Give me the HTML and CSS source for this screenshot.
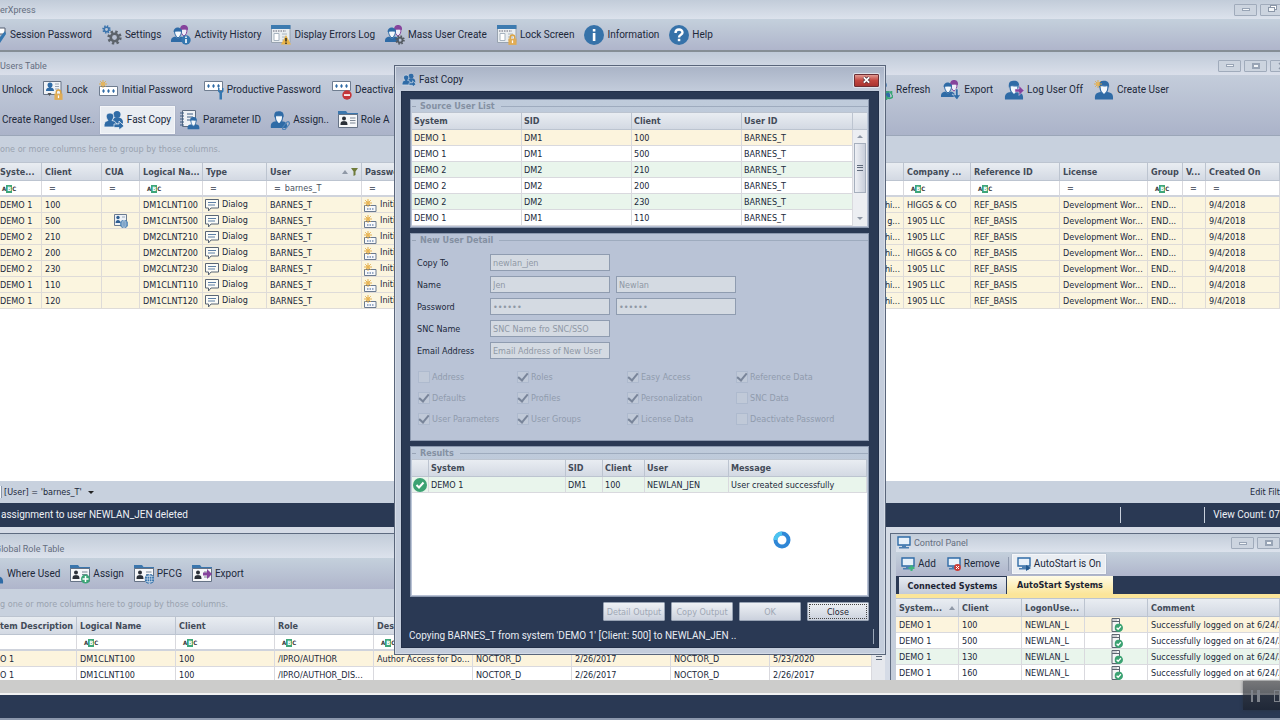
FILE: index.html
```html
<!DOCTYPE html>
<html lang="en">
<head>
<meta charset="utf-8">
<title>UserXpress</title>
<link rel="stylesheet" href="styles.css">
</head>
<body>
<svg class="defs" aria-hidden="true">
  <symbol id="person" viewBox="0 0 20 20">
    <path fill="#2f6ba6" d="M1 19.500c-.5-5 1-7 6-7.500l3 3 3-3c5 .5 6.500 2.500 6 7.500z"/>
    <path fill="#f4f8fc" stroke="#2f6ba6" stroke-width="1.200" d="M6 5.500c0 4 1 6.500 2 7.300l2 2.200 2-2.200c1-.8 2-3.300 2-7.300-3 1-5 0-8 0z"/>
    <path fill="#2f6ba6" d="M5 8C4 3 6 1 8 1c5-1 8 1 7 7l-1.200-2.500C11 6 9 5 6.500 5.500z"/>
  </symbol>
  <symbol id="pair" viewBox="0 0 20 20">
    <path fill="#f0eef8" stroke="#86439c" stroke-width="1" d="M10 4c0 4 1 6 3 7 2-1 3-3 3-7z"/>
    <path fill="#86439c" d="M9 5c0-4 2-5 4-5s4.500 1 4 5c-2-1-5-1-8 0z"/>
    <path fill="#2f6ba6" d="M0 17c-.3-3.500 1-5 4.500-5.500L7 13.500l2.500-2c3.500.5 4.800 2 4.500 5.500z"/>
    <path fill="#f4f8fc" stroke="#2f6ba6" d="M3.500 6c0 3 1 5 3.500 7 2.500-2 3.500-4 3.500-7z"/>
    <path fill="#2f6ba6" d="M2.500 7c0-3 2-4.500 4-4.500S11.500 4 11 7c-2-1.200-5-1.200-8.500 0z"/>
  </symbol>
  <symbol id="gear" viewBox="0 0 20 20">
    <circle cx="10" cy="10" r="7.500" fill="none" stroke="currentColor" stroke-width="4" stroke-dasharray="3 2.900"/>
    <circle cx="10" cy="10" r="5" fill="none" stroke="currentColor" stroke-width="3.500"/>
  </symbol>
  <symbol id="i-session" viewBox="0 0 20 20">
    <path fill="#fff" stroke="#555f70" d="M0 3h19v6H0z"/><path fill="#3577b0" d="m8 11 3-2 3 3 5-6 1 3-6 9z"/>
  </symbol>
  <symbol id="i-settings" viewBox="0 0 20 20">
    <use href="#gear" x="0" y="0" width="9" height="9" color="#3b74ad"/>
    <use href="#gear" x="5" y="5" width="15" height="15" color="#5d636b"/>
  </symbol>
  <symbol id="i-history" viewBox="0 0 20 20">
    <use href="#pair" width="20" height="20"/><circle cx="15" cy="15" r="4.700" fill="#3577b0"/>
    <path fill="#fff" d="M14.200 11.500h1.600v1.500h-1.600zM14.200 14h1.600v4h-1.600z"/>
  </symbol>
  <symbol id="screen" viewBox="0 0 20 20">
    <path fill="#e9edf0" stroke="#98a3b0" d="M.5.5h18.500v17H.5z"/><path fill="#3d7bb0" d="M0 0h19.500v4H0z"/>
    <path stroke="#667" stroke-dasharray="1.500 1" d="M2 6h13"/><path stroke="#a8b4c0" d="M3 8.500h5v7H3zM11 9h5M11 12h5M11 15h5" fill="#fff"/>
  </symbol>
  <symbol id="i-errors" viewBox="0 0 20 20">
    <use href="#screen" width="20" height="20"/><path fill="#eab54a" d="M15 10l5 9.500H10z"/><path fill="#222" d="M14.300 13h1.400v3.500h-1.400zM14.300 17.500h1.400V19h-1.400z"/>
  </symbol>
  <symbol id="padlock" viewBox="0 0 10 12">
    <path fill="none" stroke="#dba342" stroke-width="1.600" d="M2.500 6V3.500a2.500 2.500 0 0 1 5 0V6"/><path fill="#e0ac55" d="M.5 5h9v7h-9z"/><path fill="#fff" d="M4.300 7h1.400v3H4.300z"/>
  </symbol>
  <symbol id="i-lockscreen" viewBox="0 0 20 20">
    <use href="#screen" width="20" height="20"/><use href="#padlock" x="11" y="9" width="9" height="11"/>
  </symbol>
  <symbol id="i-mass" viewBox="0 0 20 20">
    <use href="#pair" width="20" height="20"/><use href="#gear" x="10" y="10" width="10" height="10" color="#555b62"/>
  </symbol>
  <symbol id="i-info" viewBox="0 0 20 20">
    <circle cx="10" cy="10" r="10" fill="#3672a9"/><path fill="#fff" d="M8.800 4h2.600v2.500H8.800zM8.800 8h2.600v8H8.800z"/>
  </symbol>
  <symbol id="i-help" viewBox="0 0 20 20">
    <circle cx="10" cy="10" r="10" fill="#3672a9"/><path fill="none" stroke="#fff" stroke-width="2.400" d="M6.500 8c0-4.500 7-4.500 7-.5 0 2.500-3.500 2-3.500 5"/><path fill="#fff" d="M8.800 13.800h2.500v2.400H8.800z"/>
  </symbol>
  <symbol id="idcard" viewBox="0 0 20 20">
    <path fill="#f0f3f7" stroke="#667386" d="M.5 1.500H18v13H.5z"/><circle cx="7" cy="5" r="2.500" fill="#2f6ba6"/><path fill="#2f6ba6" d="M3 11c0-3 2-3 3-3.500V6h2v1.500c1 .5 3 .5 3 3.500z"/>
    <path stroke="#9aa4b2" d="M12 4h4M12 6.500h4M12 9h4"/><path fill="#555" d="M4.500 13h4l-2 3z"/>
  </symbol>
  <symbol id="i-lock" viewBox="0 0 20 20">
    <use href="#idcard" width="20" height="20"/><use href="#padlock" x="11" y="9" width="9" height="11"/>
  </symbol>
  <symbol id="stars" viewBox="0 0 20 10">
    <path fill="#fff" stroke="#6f7d90" d="M.5.5h18v9H.5z"/><path stroke="#2f6ba6" stroke-width="1.200" d="M3 5h3M4.500 3.300v3.400M8 5h3M9.500 3.300v3.400M13 5h3M14.500 3.300v3.400"/>
  </symbol>
  <symbol id="sun" viewBox="0 0 10 10">
    <path stroke="#e0a840" stroke-width="1.100" d="M5 0v10M0 5h10M1.500 1.500l7 7M8.500 1.500l-7 7"/><circle cx="5" cy="5" r="2.200" fill="#e9b556"/>
  </symbol>
  <symbol id="i-initial" viewBox="0 0 20 20">
    <use href="#stars" y="6" width="20" height="10"/><use href="#sun" width="8" height="8"/>
  </symbol>
  <symbol id="i-prod" viewBox="0 0 20 20">
    <use href="#stars" y="1" width="20" height="10"/><path fill="#3577b0" d="M14 8v3.500l1.500 1.500v6.500h2.500v-6.500l1.500-1.500V8h-1.500v3h-2.500V8z"/>
  </symbol>
  <symbol id="i-deact" viewBox="0 0 20 20">
    <use href="#stars" y="1" width="20" height="10"/><circle cx="15" cy="15" r="4.700" fill="#c5373a"/><path fill="#fff" d="M12 14.200h6v1.700h-6z"/>
  </symbol>
  <symbol id="i-copy" viewBox="0 0 20 20">
    <circle cx="13" cy="4.500" r="3.500" fill="#2f6ba6"/><path fill="#2f6ba6" d="M8 14c-1-5 2-6 4-6.500h3c3 1 4 2 4 6z"/>
    <path fill="#2f6ba6" stroke="#eef3f8" stroke-width=".8" d="M0 17c0-4 1-6 4-6.500C1 7 2 3 6 3s5 4 2 7.500c3 .5 5 2 5 6.500z"/>
    <path fill="#2f6ba6" stroke="#eef3f8" stroke-width=".7" d="M10 14h5v-3l5 5-5 4v-2.500h-5z"/>
  </symbol>
  <symbol id="i-param" viewBox="0 0 20 20">
    <path fill="#eef1f5" stroke="#5e6d82" d="M2.500.5h13v16h-13z"/><path stroke="#3f5e84" d="M0 3h4M0 6h4M0 9h4M0 12h4M0 15h4M7 4h6M7 7h6M7 10h3"/>
    <use href="#person" x="7" y="6" width="13" height="14"/>
  </symbol>
  <symbol id="i-assign" viewBox="0 0 20 20">
    <use href="#person" width="18" height="19"/><path fill="none" stroke="#4e83b8" stroke-width="1.200" d="m13 17 4-5c2-1 3 1 2 2.500l-4 5c-2 1-3-1-2-2.500l3-4"/>
  </symbol>
  <symbol id="i-role" viewBox="0 0 20 20">
    <path fill="#3b76ad" d="M0 1h8l1.500 2H20v3H0z"/><path fill="#f6f7f9" stroke="#667386" d="M.5 4.500h19v13H.5z"/>
    <circle cx="6" cy="8.500" r="2" fill="#2b3038"/><path fill="#2b3038" d="M2.500 15c0-4 1.500-3.500 3.500-4 2 .5 3.500 0 3.500 4z"/><path stroke="#7d8795" d="M12 8h5.500M12 10.500h5.500M12 13h5.500"/>
  </symbol>
  <symbol id="i-roleadd" viewBox="0 0 20 20">
    <use href="#i-role" width="20" height="20"/><circle cx="15.500" cy="15" r="4.500" fill="#3ca577"/><path stroke="#fff" stroke-width="1.500" d="M12.500 15h6M15.500 12v6"/>
  </symbol>
  <symbol id="globe" viewBox="0 0 10 10">
    <circle cx="5" cy="5" r="5" fill="#3b76ad"/><path fill="none" stroke="#dfe8f2" stroke-width=".6" d="M0 5h10M5 0v10M1 2.500h8M1 7.500h8M5 0c-3 2-3 8 0 10 3-2 3-8 0-10"/>
  </symbol>
  <symbol id="i-pfcg" viewBox="0 0 20 20">
    <use href="#i-role" width="20" height="20"/><use href="#globe" x="10.500" y="10" width="10" height="10"/>
  </symbol>
  <symbol id="i-roleexport" viewBox="0 0 20 20">
    <use href="#i-role" width="20" height="20"/><path fill="#86439c" d="M11 8.500h4V5l5 5-5 5v-3.500h-4z"/>
  </symbol>
  <symbol id="i-refresh" viewBox="0 0 20 20">
    <use href="#person" width="18" height="18"/><path fill="none" stroke="#38a774" stroke-width="1.600" d="M12 15c0-4 5-4 6.500-1.500V11M20 15c0 4-5 4-6.500 2V20"/>
  </symbol>
  <symbol id="i-export" viewBox="0 0 20 20">
    <use href="#pair" width="20" height="20"/><path fill="#2f6ba6" stroke="#dfe6f0" stroke-width=".5" d="M14.500 9h2.500v6l3-1-4 6-5-6 3.500 1z"/>
  </symbol>
  <symbol id="i-logoff" viewBox="0 0 20 20">
    <use href="#person" width="20" height="20"/><path fill="#86439c" stroke="#e3e2f0" stroke-width=".5" d="M11 9h4V5.500l5 5-5 5V12h-4z"/>
  </symbol>
  <symbol id="i-create" viewBox="0 0 20 20">
    <use href="#person" width="20" height="20"/><use href="#sun" width="8" height="8"/>
  </symbol>
  <symbol id="monitor" viewBox="0 0 14 14">
    <path fill="#e8f1fa" stroke="#2f6ba6" stroke-width="1.400" d="M1 1h12v8H1z"/><path fill="#4c7fb2" d="M5 9h4v2h3v1.500H2V11h3z"/>
  </symbol>
  <symbol id="i-add" viewBox="0 0 14 14">
    <use href="#monitor" width="14" height="14"/><path stroke="#3fb57e" stroke-width="2" d="M7.500 11h6M10.500 8v6"/>
  </symbol>
  <symbol id="i-remove" viewBox="0 0 14 14">
    <use href="#monitor" width="14" height="14"/><circle cx="10.500" cy="10.500" r="3.400" fill="#cc3b35"/><path stroke="#fff" d="m9 9 3 3M12 9l-3 3"/>
  </symbol>
  <symbol id="i-auto" viewBox="0 0 14 14">
    <use href="#monitor" width="14" height="14"/><path fill="#235a91" d="m9 8 5 3-5 3z"/>
  </symbol>
  <symbol id="i-dialog" viewBox="0 0 14 13">
    <path fill="#fbfbf6" stroke="#596575" d="M.5.500h13v8.500H6l-2.500 3V9h-3z"/><path stroke="#5d7fa5" d="M3 3.500h8M3 6h7"/>
  </symbol>
  <symbol id="i-pw" viewBox="0 0 13 13">
    <path fill="#f8f9fb" stroke="#6a7a90" d="M.5 6.500h11.500v6H.5z"/><path stroke="#3a5f92" stroke-dasharray="1.500 1" d="M3 10h7"/><use href="#sun" width="8" height="8"/>
  </symbol>
  <symbol id="i-cua" viewBox="0 0 14 14">
    <path fill="#edf1f6" stroke="#6a7a90" d="M.5.5h12v11H.5z"/><circle cx="4" cy="3.500" r="1.700" fill="#2f5f92"/><path fill="#2f5f92" d="M1.500 9c0-4 5-4 5 0z"/><path stroke="#9ab" d="M8 3h3"/><use href="#globe" x="6" y="6" width="8" height="8"/>
  </symbol>
  <symbol id="i-ok" viewBox="0 0 14 14">
    <circle cx="7" cy="7" r="7" fill="#3ba272"/><path fill="none" stroke="#fff" stroke-width="2" d="m3.500 7 2.500 2.500 4.500-5"/>
  </symbol>
  <symbol id="i-server" viewBox="0 0 12 14">
    <path fill="#f4f5f6" stroke="#5c6570" d="M1 .5h7.500v13H1z"/><path stroke="#5c6570" d="M1 3.500h7.500M3 1.500v1M5 1.500v1"/><use href="#i-ok" x="3.500" y="5.500" width="8.500" height="8.500"/>
  </symbol>
</svg>

<div class="app">
  <header class="titlebar app-title"><span class="title-text">erXpress</span>
    <div class="winctl"><button aria-label="Minimize"><i class="g-min"></i></button><button aria-label="Restore"><i class="g-restore"></i></button></div>
  </header>
  <nav class="toolbar main-tools">
    <button class="tool cut-icon"><svg class="ic"><use href="#i-session"/></svg>Session Password</button>
    <button class="tool"><svg class="ic"><use href="#i-settings"/></svg>Settings</button>
    <button class="tool"><svg class="ic"><use href="#i-history"/></svg>Activity History</button>
    <button class="tool"><svg class="ic"><use href="#i-errors"/></svg>Display Errors Log</button>
    <button class="tool"><svg class="ic"><use href="#i-mass"/></svg>Mass User Create</button>
    <button class="tool"><svg class="ic"><use href="#i-lockscreen"/></svg>Lock Screen</button>
    <button class="tool"><svg class="ic"><use href="#i-info"/></svg>Information</button>
    <button class="tool"><svg class="ic"><use href="#i-help"/></svg>Help</button>
  </nav>

  <section class="users">
    <header class="titlebar sub-title"><span class="title-text">Users Table</span>
      <div class="winctl sub-ctl"><button aria-label="Minimize"><i class="g-min"></i></button><button aria-label="Maximize"><i class="g-max"></i></button><button aria-label="Close"><svg class="g-x" viewBox="0 0 8 8"><path stroke="#8c97a8" stroke-width="1.500" d="m1 1 6 6M7 1 1 7"/></svg></button></div>
    </header>
    <div class="ribbon">
      <div class="ribbon-row split">
        <div class="toolgroup">
          <button class="tool">Unlock</button>
          <button class="tool"><svg class="ic"><use href="#i-lock"/></svg>Lock</button>
          <button class="tool"><svg class="ic"><use href="#i-initial"/></svg>Initial Password</button>
          <button class="tool"><svg class="ic"><use href="#i-prod"/></svg>Productive Password</button>
          <button class="tool"><svg class="ic"><use href="#i-deact"/></svg>Deactivate</button>
        </div>
        <div class="toolgroup">
          <button class="tool"><svg class="ic"><use href="#i-refresh"/></svg>Refresh</button>
          <button class="tool"><svg class="ic"><use href="#i-export"/></svg>Export</button>
          <button class="tool"><svg class="ic"><use href="#i-logoff"/></svg>Log User Off</button>
          <button class="tool"><svg class="ic"><use href="#i-create"/></svg>Create User</button>
        </div>
      </div>
      <div class="ribbon-row tight">
        <button class="tool">Create Ranged User..</button>
        <button class="tool pressed"><svg class="ic"><use href="#i-copy"/></svg>Fast Copy</button>
        <button class="tool"><svg class="ic"><use href="#i-param"/></svg>Parameter ID</button>
        <button class="tool spaced"><svg class="ic"><use href="#i-assign"/></svg>Assign..</button>
        <button class="tool spaced"><svg class="ic"><use href="#i-role"/></svg>Role A</button>
      </div>
    </div>
    <div class="groupby">one or more columns here to group by those columns.</div>
    <div class="grid-area">
      <table class="grid cream">
        <colgroup><col class="w41"><col class="w60"><col class="w38"><col class="w63"><col class="w64"><col class="w95"><col class="w479"><col class="w64"><col class="w67"><col class="w89"><col class="w88"><col class="w35"><col class="w23"><col></colgroup>
        <thead>
          <tr><th class="edge">Syste...</th><th>Client</th><th>CUA</th><th>Logical Na...</th><th>Type</th><th><span class="sortcell">User<span class="marks"><i class="sort"></i><svg class="funnel" viewBox="0 0 7 8"><path fill="#6f7b3a" d="M0 0h7L4.500 3.500V7L2.500 8V3.500z"/></svg></span></span></th><th>Password</th><th></th><th>Company ...</th><th>Reference ID</th><th>License</th><th>Group</th><th>V...</th><th>Created On</th></tr>
          <tr class="filter"><td><span class="abc flush">A<b>B</b>C</span></td><td><span class="eq">=</span></td><td><span class="eq">=</span></td><td><span class="abc">A<b>B</b>C</span></td><td><span class="eq">=</span></td><td><label class="eq" for="fuser">=</label><input id="fuser" class="filter-in" value="barnes_T"></td><td><span class="eq">=</span></td><td></td><td><span class="abc">A<b>B</b>C</span></td><td><span class="abc">A<b>B</b>C</span></td><td><span class="eq">=</span></td><td><span class="abc">A<b>B</b>C</span></td><td><span class="eq">=</span></td><td><span class="eq">=</span></td></tr>
        </thead>
        <tbody>
          <tr><td class="edge">DEMO 1</td><td>100</td><td></td><td>DM1CLNT100</td><td><svg class="dlg"><use href="#i-dialog"/></svg>Dialog</td><td>BARNES_T</td><td><svg class="pw"><use href="#i-pw"/></svg>Initial</td><td class="r">hi...</td><td>HIGGS &amp; CO</td><td>REF_BASIS</td><td>Development Wor...</td><td>END...</td><td></td><td>9/4/2018</td></tr>
          <tr><td class="edge">DEMO 1</td><td>500</td><td class="c"><svg class="cua"><use href="#i-cua"/></svg></td><td>DM1CLNT500</td><td><svg class="dlg"><use href="#i-dialog"/></svg>Dialog</td><td>BARNES_T</td><td><svg class="pw"><use href="#i-pw"/></svg>Initial</td><td class="r">g...</td><td>1905 LLC</td><td>REF_BASIS</td><td>Development Wor...</td><td>END...</td><td></td><td>9/4/2018</td></tr>
          <tr><td class="edge">DEMO 2</td><td>210</td><td></td><td>DM2CLNT210</td><td><svg class="dlg"><use href="#i-dialog"/></svg>Dialog</td><td>BARNES_T</td><td><svg class="pw"><use href="#i-pw"/></svg>Initial</td><td class="r">hi...</td><td>1905 LLC</td><td>REF_BASIS</td><td>Development Wor...</td><td>END...</td><td></td><td>9/4/2018</td></tr>
          <tr><td class="edge">DEMO 2</td><td>200</td><td></td><td>DM2CLNT200</td><td><svg class="dlg"><use href="#i-dialog"/></svg>Dialog</td><td>BARNES_T</td><td><svg class="pw"><use href="#i-pw"/></svg>Initial</td><td class="r">hi...</td><td>HIGGS &amp; CO</td><td>REF_BASIS</td><td>Development Wor...</td><td>END...</td><td></td><td>9/4/2018</td></tr>
          <tr><td class="edge">DEMO 2</td><td>230</td><td></td><td>DM2CLNT230</td><td><svg class="dlg"><use href="#i-dialog"/></svg>Dialog</td><td>BARNES_T</td><td><svg class="pw"><use href="#i-pw"/></svg>Initial</td><td class="r">hi...</td><td>1905 LLC</td><td>REF_BASIS</td><td>Development Wor...</td><td>END...</td><td></td><td>9/4/2018</td></tr>
          <tr><td class="edge">DEMO 1</td><td>110</td><td></td><td>DM1CLNT110</td><td><svg class="dlg"><use href="#i-dialog"/></svg>Dialog</td><td>BARNES_T</td><td><svg class="pw"><use href="#i-pw"/></svg>Initial</td><td class="r">hi...</td><td>1905 LLC</td><td>REF_BASIS</td><td>Development Wor...</td><td>END...</td><td></td><td>9/4/2018</td></tr>
          <tr><td class="edge">DEMO 1</td><td>120</td><td></td><td>DM1CLNT120</td><td><svg class="dlg"><use href="#i-dialog"/></svg>Dialog</td><td>BARNES_T</td><td><svg class="pw"><use href="#i-pw"/></svg>Initial</td><td class="r">hi...</td><td>1905 LLC</td><td>REF_BASIS</td><td>Development Wor...</td><td>END...</td><td></td><td>9/4/2018</td></tr>
        </tbody>
      </table>
    </div>
    <div class="filterbar"><span class="filter-expr"><i class="box-end"></i>[User] = 'barnes_T'<i class="caret"></i></span><button class="link">Edit Filt</button></div>
    <div class="statusbar"><span>assignment to user NEWLAN_JEN deleted</span><span class="count"><i class="sep"></i><i class="sep"></i><span>View Count: 07</span></span></div>
  </section>

  <div class="lower">
    <section class="roles">
      <header class="titlebar role-title"><span class="title-text">Global Role Table</span></header>
      <div class="toolbar role-tools">
        <button class="tool cut-icon2"><svg class="ic"><use href="#person"/></svg>Where Used</button>
        <button class="tool"><svg class="ic"><use href="#i-roleadd"/></svg>Assign</button>
        <button class="tool"><svg class="ic"><use href="#i-pfcg"/></svg>PFCG</button>
        <button class="tool"><svg class="ic"><use href="#i-roleexport"/></svg>Export</button>
      </div>
      <div class="groupby short">g one or more columns here to group by those columns.</div>
      <div class="role-body">
        <table class="grid">
          <colgroup><col class="w77"><col class="w99"><col class="w99"><col class="w99"><col class="w99"><col class="w99"><col class="w99"><col class="w99"><col></colgroup>
          <thead>
            <tr><th class="edge">tem Description</th><th>Logical Name</th><th>Client</th><th>Role</th><th>Description</th><th></th><th></th><th></th><th></th></tr>
            <tr class="filter"><td></td><td><span class="abc">A<b>B</b>C</span></td><td><span class="abc">A<b>B</b>C</span></td><td><span class="abc">A<b>B</b>C</span></td><td><span class="abc">A<b>B</b>C</span></td><td></td><td></td><td></td><td></td></tr>
          </thead>
          <tbody>
            <tr class="cur"><td class="edge">O 1</td><td>DM1CLNT100</td><td>100</td><td>/IPRO/AUTHOR</td><td>Author Access for Do...</td><td>NOCTOR_D</td><td>2/26/2017</td><td>NOCTOR_D</td><td>5/23/2020</td></tr>
            <tr><td class="edge">O 1</td><td>DM1CLNT100</td><td>100</td><td>/IPRO/AUTHOR_DIS...</td><td></td><td>NOCTOR_D</td><td>2/26/2017</td><td>NOCTOR_D</td><td>2/26/2017</td></tr>
          </tbody>
        </table>
        <div class="vbar"><i class="grip"></i></div>
      </div>
    </section>
    <section class="control">
      <header class="titlebar ctl-title"><svg class="ic14"><use href="#monitor"/></svg><span class="title-text">Control Panel</span>
        <div class="winctl"><button aria-label="Minimize"><i class="g-min"></i></button><button aria-label="Maximize"><i class="g-max"></i></button></div>
      </header>
      <div class="toolbar ctl-tools">
        <button class="tool"><svg class="ic14"><use href="#i-add"/></svg>Add</button>
        <button class="tool"><svg class="ic14"><use href="#i-remove"/></svg>Remove</button>
        <i class="vline"></i>
        <button class="tool pressed"><svg class="ic14"><use href="#i-auto"/></svg>AutoStart is On</button>
      </div>
      <div class="tabs" role="tablist"><button role="tab" class="tab">Connected Systems</button><button role="tab" class="tab on" aria-selected="true">AutoStart Systems</button></div>
      <table class="grid green">
        <colgroup><col class="w63"><col class="w63"><col class="w63"><col class="w63"><col></colgroup>
        <thead><tr><th><span class="sortcell">System...<i class="sort"></i></span></th><th>Client</th><th>LogonUse...</th><th></th><th>Comment</th></tr></thead>
        <tbody>
          <tr class="cur"><td>DEMO 1</td><td>100</td><td>NEWLAN_L</td><td class="c"><svg class="srv"><use href="#i-server"/></svg></td><td>Successfully logged on at 6/24/2</td></tr>
          <tr><td>DEMO 1</td><td>500</td><td>NEWLAN_L</td><td class="c"><svg class="srv"><use href="#i-server"/></svg></td><td>Successfully logged on at 6/24/2</td></tr>
          <tr class="alt"><td>DEMO 1</td><td>130</td><td>NEWLAN_L</td><td class="c"><svg class="srv"><use href="#i-server"/></svg></td><td>Successfully logged on at 6/24/2</td></tr>
          <tr><td>DEMO 1</td><td>160</td><td>NEWLAN_L</td><td class="c"><svg class="srv"><use href="#i-server"/></svg></td><td>Successfully logged on at 6/24/2</td></tr>
        </tbody>
      </table>
    </section>
  </div>
  <div class="tray"></div>
  <footer class="appfoot"></footer>
  <button class="pause" aria-label="Pause"><i></i><i></i><i class="next"></i></button>
</div>

<div class="overlay">
  <div class="dialog" role="dialog" aria-labelledby="dlgt">
    <header class="dlg-title"><svg class="ic14"><use href="#i-copy"/></svg><span id="dlgt">Fast Copy</span><button class="close" aria-label="Close window"><svg viewBox="0 0 10 8"><path stroke="#4a3038" stroke-width="3.600" d="m2 1 6 6M8 1 2 7"/><path stroke="#fff" stroke-width="2" d="m2 1 6 6M8 1 2 7"/></svg></button></header>
    <div class="dlg-body">
      <section class="group">
        <h2>Source User List</h2>
        <div class="source">
          <table class="grid green">
            <colgroup><col class="w110"><col class="w110"><col class="w110"><col></colgroup>
            <thead><tr><th>System</th><th>SID</th><th>Client</th><th>User ID</th></tr></thead>
            <tbody>
              <tr class="cur"><td>DEMO 1</td><td>DM1</td><td>100</td><td>BARNES_T</td></tr>
              <tr><td>DEMO 1</td><td>DM1</td><td>500</td><td>BARNES_T</td></tr>
              <tr class="alt"><td>DEMO 2</td><td>DM2</td><td>210</td><td>BARNES_T</td></tr>
              <tr><td>DEMO 2</td><td>DM2</td><td>200</td><td>BARNES_T</td></tr>
              <tr class="alt"><td>DEMO 2</td><td>DM2</td><td>230</td><td>BARNES_T</td></tr>
              <tr><td>DEMO 1</td><td>DM1</td><td>110</td><td>BARNES_T</td></tr>
            </tbody>
          </table>
          <div class="scroll"><div class="scroll-head"></div><i class="up"></i><div class="thumb"><i class="grip"></i></div><i class="down"></i></div>
        </div>
      </section>
      <section class="group detail">
        <h2>New User Detail</h2>
        <form class="fields">
          <label for="f1">Copy To</label><input id="f1" value="newlan_jen" disabled>
          <label for="f2">Name</label><input id="f2" value="Jen" disabled><input aria-label="Last name" value="Newlan" disabled>
          <label for="f3">Password</label><input id="f3" type="password" value="secret" disabled><input aria-label="Repeat password" type="password" value="secret" disabled>
          <label for="f4">SNC Name</label><input id="f4" value="SNC Name fro SNC/SSO" disabled>
          <label for="f5">Email Address</label><input id="f5" value="Email Address of New User" disabled>
        </form>
        <div class="checks">
          <label><input type="checkbox" disabled>Address</label><label><input type="checkbox" checked disabled>Roles</label><label><input type="checkbox" checked disabled>Easy Access</label><label><input type="checkbox" checked disabled>Reference Data</label>
          <label><input type="checkbox" checked disabled>Defaults</label><label><input type="checkbox" checked disabled>Profiles</label><label><input type="checkbox" checked disabled>Personalization</label><label><input type="checkbox" disabled>SNC Data</label>
          <label><input type="checkbox" checked disabled>User Parameters</label><label><input type="checkbox" checked disabled>User Groups</label><label><input type="checkbox" checked disabled>License Data</label><label><input type="checkbox" disabled>Deactivate Password</label>
        </div>
      </section>
      <section class="group results">
        <h2>Results</h2>
        <div class="results-body">
          <table class="grid green">
            <colgroup><col class="w17"><col class="w137"><col class="w37"><col class="w42"><col class="w84"><col></colgroup>
            <thead><tr><th></th><th>System</th><th>SID</th><th>Client</th><th>User</th><th>Message</th></tr></thead>
            <tbody><tr class="alt"><td class="tick"><svg class="ic14"><use href="#i-ok"/></svg></td><td>DEMO 1</td><td>DM1</td><td>100</td><td>NEWLAN_JEN</td><td>User created successfully</td></tr></tbody>
          </table>
          <svg class="busy" viewBox="0 0 18 18"><circle cx="9" cy="9" r="6.500" fill="none" stroke="#2f87d6" stroke-width="4"/><path fill="none" stroke="#4cc4f0" stroke-width="4" d="M2.500 9A6.500 6.500 0 0 1 9 2.500"/></svg>
        </div>
      </section>
      <div class="actions"><button disabled>Detail Output</button><button disabled>Copy Output</button><button disabled>OK</button><button class="focus">Close</button></div>
      <div class="dlg-status"><span>Copying BARNES_T from system 'DEMO 1' [Client: 500] to NEWLAN_JEN ..</span><i></i></div>
    </div>
  </div>
</div>
</body>
</html>
```

FILE: styles.css
```css
:root {
  --ui: Roboto, "Noto Sans", sans-serif;
  --data: "DejaVu Sans Condensed", "DejaVu Sans", sans-serif;
  --navy: #2a3954;
  --ink: #20283a;
  --pale: #c8d1de;
}
* { box-sizing: border-box; }
html, body { height: 100%; margin: 0; }
body { overflow: hidden; font: 10px/14px var(--ui); color: var(--ink); background: var(--pale); }
button, input { font: inherit; color: inherit; margin: 0; }
button { border: 0; background: none; padding: 0; white-space: nowrap; }
i { display: block; }
.defs { position: absolute; width: 0; height: 0; }
.app { display: flex; flex-direction: column; height: 100vh; }

.titlebar { display: flex; align-items: center; font-size: 9px; color: #646d7e; background: linear-gradient(#c2ccd9, #dce2ec); overflow: hidden; flex: none; }
.title-text { flex: 1; white-space: nowrap; }
.app-title { height: 19px; }
.sub-title { height: 23px; padding-top: 4px; background: linear-gradient(#bfcad8, #dadfea); }
.winctl { display: flex; gap: 3px; flex: none; }
.winctl button { display: grid; place-items: center; width: 23px; height: 12px; border: 1px solid #a0abbb; border-radius: 1px; background: #ccd4df; }
.app-title .winctl { margin-right: -3px; }
.sub-title .winctl { margin-right: -13px; }
.ctl-title .winctl { margin-right: 0; }
.g-min { width: 8px; height: 3px; border: 1px solid #98a4b5; background: #f2f5f8; }
.g-max { width: 8px; height: 6px; border: 2px solid #98a4b5; background: #f2f5f8; }
.g-restore { width: 7px; height: 5px; border: 1px solid #8b97a8; box-shadow: 2px -2px 0 -1px #fff, 2px -2px 0 0 #8b97a8; background: #f2f5f8; }
.g-x { width: 8px; height: 8px; }

.toolbar { display: flex; align-items: center; gap: 10px; overflow: hidden; flex: none; background: linear-gradient(#c4d0dc, #afb5cb); }
.main-tools { height: 33px; border-bottom: 2px solid #858e95; }
.tool { display: flex; align-items: center; gap: 3px; flex: none; line-height: 20px; }
.cut-icon { margin-left: -14px; gap: 4px; }
.cut-icon2 { margin-left: -16px; }
.ic { width: 20px; height: 20px; flex: none; }
.ic14 { width: 14px; height: 14px; flex: none; }

.users { display: flex; flex-direction: column; flex: 1; min-height: 0; }
.ribbon { flex: none; background: linear-gradient(#c4cddb, #abb3c9); border-bottom: 1px solid #9ba6b8; }
.ribbon-row { display: flex; align-items: center; height: 30px; padding-left: 2px; overflow: hidden; }
.split { display: grid; grid-template-columns: 871px 1fr; }
.toolgroup { display: flex; gap: 11px; overflow: hidden; }
.tight { gap: 5px; }
.spaced { margin-left: 4px; }
.pressed { background: #e9edf2; border: 1px solid #f4f6f9; box-shadow: 0 0 1px #8c98aa; padding: 3px 3px; }
.groupby { flex: none; height: 26px; font: 9px/26px var(--data); background: var(--pale); color: #9aa3b0; white-space: nowrap; overflow: hidden; }
.grid-area { flex: 1; background: #fff; overflow: hidden; }

.grid { table-layout: fixed; width: 100%; border-spacing: 0; font: 9px/12px var(--data); background: #fff; }
.grid th { height: 19px; padding: 0 3px; text-align: left; color: #434b58; background: linear-gradient(#e9edf2, #d3d9e3); border: solid #bcc4d0; border-width: 1px 1px 1px 0; white-space: nowrap; overflow: hidden; }
.grid td { height: 16px; padding: 0 2px 0 3px; border: solid #d9d9de; border-width: 0 1px 1px 0; white-space: nowrap; overflow: hidden; }
.grid .edge { padding-left: 0; }
.grid .r { text-align: right; padding-right: 3px; }
.grid .c { text-align: center; }
.grid .filter td { background: #fff; border-bottom: 2px solid #cfd3dc; }
.cream tbody td { background: #fbf5df; border-color: #dedbd8; }
.grid .cur td { background: #fcf4dd; }
.grid .alt td { background: #e9f5ec; }
.grid svg { display: inline-block; vertical-align: middle; }
.grid .dlg { width: 14px; height: 13px; margin: -1px 3px -1px -1px; vertical-align: -4px; }
.grid .pw { width: 13px; height: 13px; margin: -1px 3px -1px -1px; vertical-align: -4px; }
.grid .cua { width: 14px; height: 14px; }
.grid .srv { width: 12px; height: 14px; }
.eq { margin-left: 4px; font-weight: bold; color: #5b6370; }
.abc { display: inline-flex; align-items: center; margin-left: 4px; font: bold 6px/8px var(--data); color: #333; vertical-align: middle; }
.abc b { background: #3fa679; color: #fff; padding: 0 1px; }
.flush { margin-left: -1px; }
.filter-in { width: 70px; height: 12px; padding: 0; margin-left: 4px; border: 0; background: none; color: #4a5260; }
.sortcell { display: flex; align-items: center; justify-content: space-between; }
.marks { display: flex; gap: 3px; }
.sort { border: 3px solid transparent; border-top: 0; border-bottom: 4px solid #8f98a6; align-self: center; }
.funnel { width: 7px; height: 8px; align-self: start; }
.w17 { width: 17px; } .w23 { width: 23px; } .w35 { width: 35px; } .w37 { width: 37px; } .w38 { width: 38px; }
.w41 { width: 42px; } .w42 { width: 42px; } .w60 { width: 60px; } .w63 { width: 63px; } .w64 { width: 64px; }
.w67 { width: 67px; } .w77 { width: 77px; } .w84 { width: 84px; } .w88 { width: 88px; } .w89 { width: 89px; }
.w95 { width: 95px; } .w99 { width: 99px; } .w110 { width: 110px; } .w137 { width: 137px; } .w479 { width: 478px; }

.filterbar { display: flex; align-items: center; justify-content: space-between; flex: none; height: 22px; background: var(--pale); font: 9px/12px var(--data); }
.filter-expr { display: flex; align-items: center; gap: 2px; }
.box-end { width: 2px; height: 12px; background: #f4f6f9; border-right: 1px solid #8b96a8; }
.caret { margin-left: 4px; border: 3px solid transparent; border-bottom: 0; border-top-color: #222; }
.statusbar { display: flex; align-items: center; justify-content: space-between; flex: none; height: 24px; padding-left: 1px; background: var(--navy); color: #eef1f6; }
.count { display: flex; align-items: center; }
.sep { width: 84px; height: 16px; border-left: 1px solid #c8d0dc; }
.sep + .sep { width: 9px; }

.lower { display: grid; grid-template-columns: minmax(0, 885px) minmax(0, 1fr); flex: none; height: 153px; padding-top: 6px; background: #d5dbe6; overflow: hidden; }
.roles { border-top: 1px solid #5e6b80; overflow: hidden; }
.role-title { height: 24px; padding-top: 5px; }
.role-title .title-text { margin-left: -5px; }
.role-tools { height: 31px; }
.groupby.short { height: 27px; line-height: 30px; }
.role-body { display: flex; }
.vbar { display: flex; justify-content: center; flex: none; width: 13px; padding-top: 38px; background: #e6e8ed; }
.grip { width: 6px; height: 6px; border: solid #5f6a7b; border-width: 1px 0; background: linear-gradient(transparent 1px, #5f6a7b 1px, #5f6a7b 2px, transparent 2px); }
.control { border: solid #5e6b80; border-width: 1px 0 0 1px; margin-left: 5px; padding-left: 5px; background: #c5cedb; overflow: hidden; }
.ctl-title { height: 18px; gap: 3px; padding-left: 1px; }
.ctl-tools { height: 24px; padding-left: 5px; gap: 11px; }
.ctl-tools .pressed { padding: 0 4px; line-height: 18px; margin-left: -8px; }
.vline { width: 1px; height: 14px; background: #8f9aae; margin-left: -3px; }
.tabs { display: flex; align-items: end; gap: 1px; height: 22px; padding-left: 3px; background: var(--navy); border-bottom: 4px solid #fbe59a; font: bold 9px/16px var(--data); }
.tab { width: 107px; height: 17px; color: #1c2433; background: linear-gradient(#e6eaf1, #c3cad8); }
.tab.on { width: 106px; height: 18px; background: linear-gradient(#fffbe6, #fbe59a); }

.tray { flex: none; height: 15px; background: #cccccb; border-bottom: 2px solid #f2f2f2; }
.appfoot { flex: none; height: 25px; background: var(--navy); border-bottom: 2px solid #8c98ad; }
.pause { position: absolute; right: 0; bottom: 10px; width: 37px; height: 29px; padding-left: 8px; display: flex; align-items: center; gap: 4px; background: linear-gradient(rgba(60, 62, 66, .6), rgba(28, 34, 46, .75)); box-shadow: 0 0 3px rgba(40, 44, 52, .5); }
.pause i { width: 4px; height: 12px; background: #7e838b; }
.pause .next { width: 10px; margin-left: 10px; background: none; border: 1px solid #7e838b; }

.overlay { position: fixed; inset: 0; display: grid; place-items: center; }
.dialog { width: 492px; padding: 0 6px 6px; border: 1px solid #59657a; background: linear-gradient(#a9b3c6, #c4cddc 26px, #c4cddc); box-shadow: inset 0 0 0 1px #d5dce7; }
.dlg-title { display: flex; align-items: center; gap: 3px; height: 25px; padding: 3px 0 0 1px; }
.dlg-title span { flex: 1; }
.close { display: grid; place-items: center; width: 25px; height: 13px; border: 1px solid #6d2f35; border-radius: 1px; background: linear-gradient(#e29a92, #c3463f 50%, #a93430); box-shadow: 0 0 0 1px #dfe4ec; }
.close svg { width: 9px; height: 8px; }
.dlg-body { padding: 7px 9px 3px 8px; background: var(--navy); border: 1px solid #222f48; }
.group { margin-bottom: 5px; padding: 0 1px 1px; border: 1px solid #8c99af; background: linear-gradient(#bfcbdb, #b8c1d4); }
.group h2 { display: flex; align-items: center; gap: 6px; height: 12px; margin: 0; font: bold 9px/12px var(--data); color: #8490a2; white-space: nowrap; }
.group h2::before { content: ""; width: 4px; border-top: 1px solid #98a4b6; margin-right: -2px; }
.group h2::after { content: ""; flex: 1; border-top: 1px solid #9eabbe; margin-right: -1px; }
.group .grid th { height: 18px; padding: 0 2px; }
.group .grid td { padding: 0 2px; }
.source { display: flex; background: #fff; }
.scroll { display: flex; flex-direction: column; align-items: center; flex: none; width: 14px; background: #eceef2; }
.scroll-head { align-self: stretch; height: 18px; background: linear-gradient(#e9edf2, #d3d9e3); border: solid #bcc4d0; border-width: 1px 0; }
.up { margin: 5px 0; border: 3px solid transparent; border-top: 0; border-bottom: 3px solid #8e97a5; }
.thumb { display: grid; place-items: center; width: 12px; height: 50px; border: 1px solid #a6afbd; background: linear-gradient(90deg, #eef0f5, #c9cfdb); }
.down { margin-top: auto; margin-bottom: 6px; border: 3px solid transparent; border-bottom: 0; border-top: 3px solid #8e97a5; }
.group.detail { padding-bottom: 15px; font: 9px/12px var(--data); background: #b9c3d6; }
.fields { display: grid; grid-template-columns: 67px 120px 120px; gap: 5px 6px; align-items: center; padding: 8px 0 0 5px; }
.fields label { grid-column: 1; }
.fields input { width: 100%; height: 17px; padding: 0 2px; border: 1px solid #8f9cb0; background: #d4dae2; color: #8f98a5; }
.checks { display: grid; grid-template-columns: 99px 110px 109px 1fr; row-gap: 9px; padding: 12px 0 0 6px; color: #909bad; }
.checks label { display: flex; align-items: center; gap: 2px; height: 12px; white-space: nowrap; }
.checks input { appearance: none; display: grid; place-items: center; width: 12px; height: 12px; border: 1px solid #aebace; background: #c0c9d8; }
.checks input:checked::after { content: ""; width: 4px; height: 8px; margin-top: -3px; border: solid #79859a; border-width: 0 2px 2px 0; transform: rotate(40deg); }
.results-body { height: 136px; background: #fff; position: relative; }
.results .grid .tick { padding: 0 1px; }
.results .grid .tick svg { display: block; }
.busy { position: absolute; left: 361px; bottom: 46px; width: 18px; height: 18px; }
.actions { display: flex; justify-content: flex-end; gap: 6px; margin-bottom: 7px; }
.actions button { width: 62px; height: 19px; border: 1px solid #98a3b4; border-radius: 1px; background: linear-gradient(#eef1f5, #cbd1dd); font: 9px/12px var(--data); color: #a0a8b5; }
.actions .focus { color: #1f2634; outline: 1px dotted #444; outline-offset: -3px; }
.dlg-status { display: flex; align-items: center; height: 16px; margin: 0 -8px; color: #e8ecf3; white-space: nowrap; }
.dlg-status span { flex: 1; padding-left: 7px; }
.dlg-status i { width: 1px; height: 15px; margin-right: 3px; background: #9aa6b8; }
```
